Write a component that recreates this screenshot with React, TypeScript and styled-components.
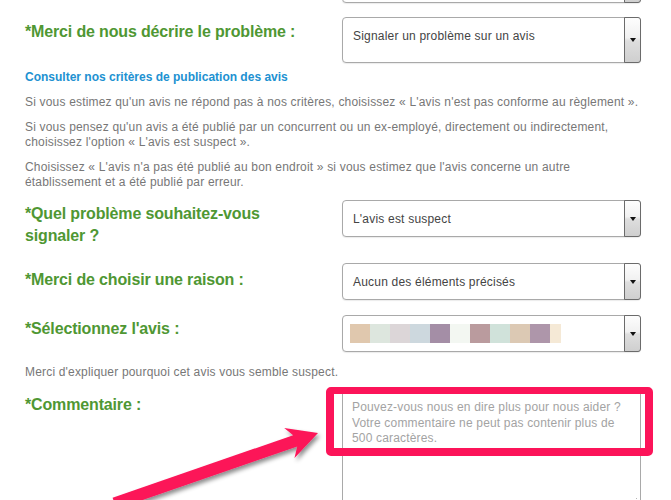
import { createGlobalStyle, styled } from "styled-components";

const GlobalStyle = createGlobalStyle`
  html, body {
    margin: 0;
    padding: 0;
    background: #fff;
  }
  body {
    font-family: "Liberation Sans", Arial, sans-serif;
    overflow: hidden;
  }
`;

const Screen = styled.div`
  position: relative;
  width: 671px;
  height: 500px;
  overflow: hidden;
`;

const Form = styled.div`
  width: 616px;
  padding-left: 25px;
`;

const Row = styled.div<{ $top: number }>`
  display: grid;
  grid-template-columns: 317px 299px;
  align-items: start;
  margin-top: ${(p) => p.$top}px;
`;

const Label = styled.label<{ $pad?: number }>`
  padding-top: ${(p) => p.$pad ?? 3}px;
  color: #4f9733;
  font-size: 16px;
  font-weight: bold;
  line-height: 22px;
  letter-spacing: -0.15px;
`;

const SelectBox = styled.div<{ $height?: number }>`
  display: flex;
  align-items: stretch;
  height: ${(p) => p.$height ?? 37}px;
  box-sizing: border-box;
  border: 1px solid #a9a9a9;
  border-radius: 4px;
  background: #fff;
  box-shadow: 0 1px 1px rgba(0, 0, 0, 0.08);
`;

const SelectValue = styled.div<{ $lift?: number }>`
  flex: 1;
  display: flex;
  align-items: center;
  padding-left: 10px;
  padding-bottom: ${(p) => (p.$lift ?? 0) * 2}px;
  color: #444;
  font-size: 12px;
  letter-spacing: 0.2px;
`;

const ArrowButton = styled.div`
  width: 15px;
  display: flex;
  align-items: center;
  justify-content: center;
  border: 1px solid #6b6b6b;
  border-radius: 0 3px 3px 0;
  margin: -1px -1px -1px 0;
  background: linear-gradient(#fdfdfd 0%, #f1f1f1 45%, #dedede 52%, #cfcfcf 100%);

  &::after {
    content: "";
    border-left: 3.5px solid transparent;
    border-right: 3.5px solid transparent;
    border-top: 4px solid #111;
  }
`;

const Swatches = styled.div`
  display: flex;
  padding-left: 7px;
  align-items: center;
  flex: 1;
`;

const Swatch = styled.span<{ $color: string; $w?: number }>`
  display: block;
  width: ${(p) => p.$w ?? 20}px;
  height: 19px;
  background: ${(p) => p.$color};
`;

const Info = styled.div<{ $top?: number }>`
  margin-top: ${(p) => p.$top ?? 7}px;
  font-size: 12px;
  line-height: 15px;
  letter-spacing: 0.18px;
`;

const InfoLink = styled.a`
  display: block;
  color: #2191d1;
  font-weight: bold;
  letter-spacing: 0;
  text-decoration: none;
`;

const Para = styled.p<{ $top?: number }>`
  margin: ${(p) => p.$top ?? 10}px 0 0;
  color: #777;
`;

const Field = styled.div`
  position: relative;

  &::after {
    content: "";
    position: absolute;
    right: 4px;
    bottom: -2px;
    width: 8px;
    height: 8px;
    background-image: radial-gradient(circle, #b5b5b5 0.8px, transparent 1px);
    background-size: 3px 3px;
    clip-path: polygon(100% 0, 100% 100%, 0 100%);
  }
`;

const Comment = styled.textarea`
  display: block;
  width: 299px;
  height: 112px;
  box-sizing: border-box;
  padding: 8px 9px;
  border: 1px solid #a9a9a9;
  border-radius: 2px;
  resize: none;
  font-family: "Liberation Sans", Arial, sans-serif;
  font-size: 12px;
  line-height: 15.5px;
  letter-spacing: 0.17px;
  color: #444;

  &::placeholder {
    color: #a3a3a3;
  }
`;

const Highlight = styled.div`
  position: absolute;
  left: -16px;
  top: -4px;
  width: 327px;
  height: 69px;
  box-sizing: border-box;
  border: 8px solid #fc1459;
  border-top-width: 7px;
  border-radius: 5px;
  pointer-events: none;
`;

const ArrowLayer = styled.svg`
  position: absolute;
  left: 0;
  top: 0;
  pointer-events: none;
`;

const photos = [
  "#e0c8ae",
  "#dde6de",
  "#dcd6d8",
  "#cdd8de",
  "#a48ea6",
  "#f3f7f2",
  "#ba9b9e",
  "#d0e2da",
  "#dcc9b4",
  "#ae96aa",
];

export default function App() {
  return (
    <Screen>
      <GlobalStyle />
      <Form>
        <Row $top={-34}>
          <span />
          <SelectBox>
            <SelectValue />
            <ArrowButton />
          </SelectBox>
        </Row>

        <Row $top={14}>
          <Label $pad={4}>*Merci de nous décrire le problème :</Label>
          <SelectBox $height={46}>
            <SelectValue $lift={4}>Signaler un problème sur un avis</SelectValue>
            <ArrowButton />
          </SelectBox>
        </Row>

        <Info>
          <InfoLink href="#">Consulter nos critères de publication des avis</InfoLink>
          <Para>
            Si vous estimez qu'un avis ne répond pas à nos critères, choisissez « L'avis n'est pas
            conforme au règlement ».
          </Para>
          <Para>
            Si vous pensez qu'un avis a été publié par un concurrent ou un ex-employé, directement ou
            indirectement,
            <br />
            choisissez l'option « L'avis est suspect ».
          </Para>
          <Para>
            Choisissez « L'avis n'a pas été publié au bon endroit » si vous estimez que l'avis concerne
            un autre
            <br />
            établissement et a été publié par erreur.
          </Para>
        </Info>

        <Row $top={10}>
          <Label>
            *Quel problème souhaitez-vous
            <br />
            signaler ?
          </Label>
          <SelectBox>
            <SelectValue>L'avis est suspect</SelectValue>
            <ArrowButton />
          </SelectBox>
        </Row>

        <Row $top={16}>
          <Label $pad={6}>*Merci de choisir une raison :</Label>
          <SelectBox>
            <SelectValue>Aucun des éléments précisés</SelectValue>
            <ArrowButton />
          </SelectBox>
        </Row>

        <Row $top={15}>
          <Label>*Sélectionnez l'avis :</Label>
          <SelectBox>
            <Swatches>
              {photos.map((c) => (
                <Swatch key={c} $color={c} />
              ))}
              <Swatch $color="#f5e9d6" $w={11} />
            </Swatches>
            <ArrowButton />
          </SelectBox>
        </Row>

        <Info $top={13}>
          <Para $top={0}>Merci d'expliquer pourquoi cet avis vous semble suspect.</Para>
        </Info>

        <Row $top={11}>
          <Label>*Commentaire :</Label>
          <Field>
            <Comment
              placeholder={
                "Pouvez-vous nous en dire plus pour nous aider ?\nVotre commentaire ne peut pas contenir plus de\n500 caractères."
              }
            />
            <Highlight />
          </Field>
        </Row>
      </Form>

      <ArrowLayer width="671" height="500" viewBox="0 0 671 500">
        <defs>
          <filter id="arrowShadow" x="-20%" y="-20%" width="140%" height="160%">
            <feDropShadow dx="2" dy="3" stdDeviation="2" floodColor="#000" floodOpacity="0.45" />
          </filter>
        </defs>
        <polygon
          points="318,433 294.5,458 297.2,446.5 116.6,509 112.6,497.7 293.2,435.2 284.2,428"
          fill="#fc1459"
          filter="url(#arrowShadow)"
        />
      </ArrowLayer>
    </Screen>
  );
}
